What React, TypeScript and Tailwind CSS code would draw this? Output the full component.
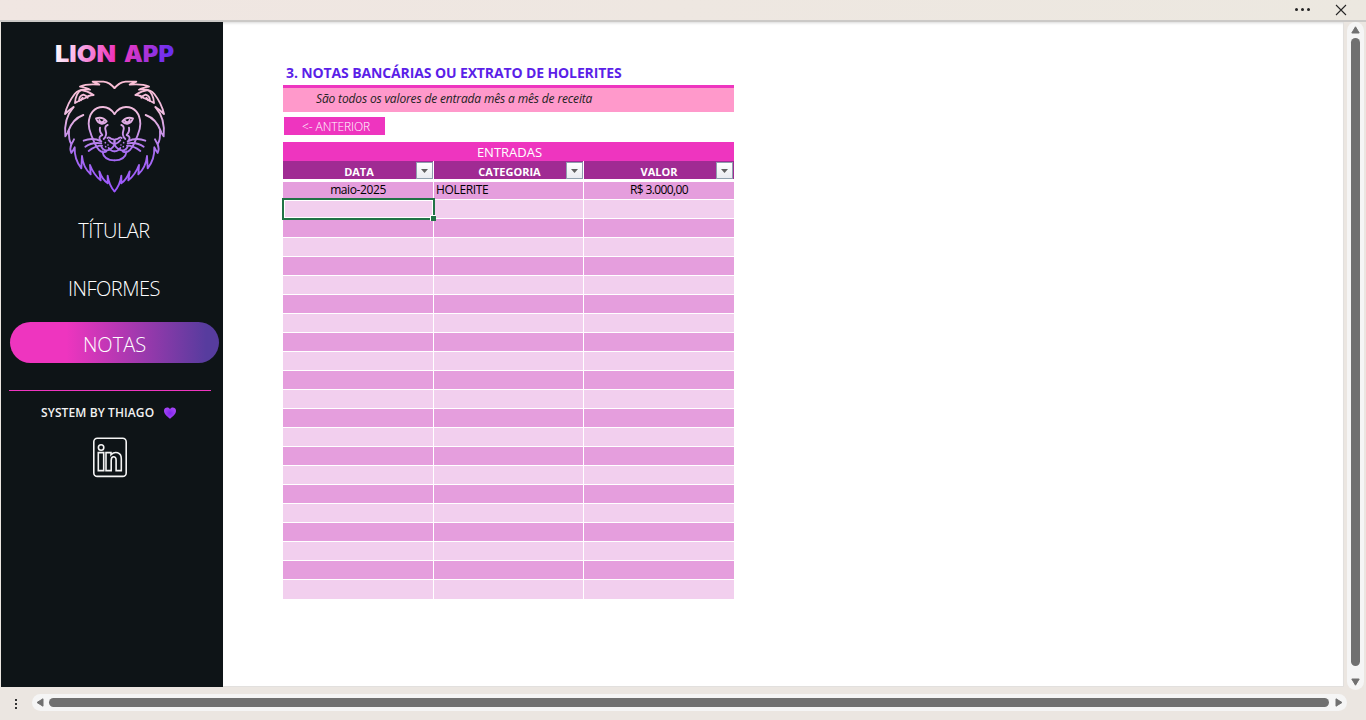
import React from "react";

const half = [
  "M223.5 174 C214 164 207 157 190 155 L158 155 C166 158 172 161 178 164 C158 162 135 163 120 170 C132 172 142 174 150 179 C128 176 112 182 104 192 C90 210 80 230 75 252 C84 243 92 236 101 231",
  "M105 219 C106 203 113 186 124 180 C138 182 150 188 161 195 C150 196 142 198 136 204 C128 207 117 212 105 219",
  "M117 213 C117 203 122 196 130 194 C136 196 140 199 143 203 M122 211 L128 203",
  "M100 232 C84 250 72 278 76 319 C80 312 83 308 87 303 C86 322 88 334 94 343 C97 338 99 334 102 328",
  "M130 255 C110 262 93 280 84 305 M94 343 C90 352 91 362 94 369 C98 364 101 358 104 352 C103 378 110 398 124 415 L126 378 C128 400 138 420 152 433 L150 405 C158 426 168 440 182 451 L178 424 C184 440 192 452 203 460 L203 437 C206 458 214 474 223.5 484",
  "M223.5 252 C214 238 202 231 189 231 C162 231 147 252 146 281 C146 300 152 310 157 323 C162 336 168 350 177 360 C184 367 192 368 199 364",
  "M168 265 C180 261 192 264 200 274 C190 286 175 283 168 265 Z M178 270 C180 278 188 279 192 272",
  "M203 285 C196 287 194 294 197 302 C201 314 199 320 191 327 M180 293 C178 303 182 310 187 315 C178 318 176 324 181 332",
  "M223.5 330 C219 326 216 329 211 325 C207 322 207 320 202 324 M223.5 330 L223.5 345 C218 353 210 360 201 361 C192 362 187 357 184 350 M206 331 C210 337 216 341 223.5 343",
  "M187 364 C190 382 205 391 223.5 391 M206 354 C211 361 217 364 223.5 364",
  "M184 334 C166 325 148 325 131 332 M184 340 C165 337 148 341 136 350 M186 347 C170 347 157 354 146 363",
];

function Lion() {
  return (
    <svg className="h-[120px] w-[109px]" viewBox="60 141 327 360" fill="none" stroke="url(#mane)" strokeWidth="5.6" strokeLinecap="round" strokeLinejoin="round">
      <defs>
        <linearGradient id="mane" gradientUnits="userSpaceOnUse" x1="0" y1="155" x2="0" y2="484">
          <stop offset="0" stopColor="#fbbfd5" />
          <stop offset=".3" stopColor="#eebbe0" />
          <stop offset=".65" stopColor="#a66cf2" />
          <stop offset="1" stopColor="#9b55ff" />
        </linearGradient>
      </defs>
      {[undefined, "translate(447 0) scale(-1 1)"].map((t, i) => (
        <g key={i} transform={t}>
          {half.map((d) => <path key={d} d={d} />)}
          <path strokeWidth="5" d="M196 338h.1M204 345h.1M197 350h.1" />
        </g>
      ))}
    </svg>
  );
}

function FilterButton({ last }: { last: boolean }) {
  return (
    <span className={`absolute top-[1px] flex h-[17px] w-[17px] items-center justify-center border border-[#8f9fae] bg-gradient-to-b from-white to-[#e9ebf0] ${last ? "right-[1px]" : "right-0"}`}>
      <svg className="h-[4px] w-[7px]" viewBox="0 0 7 4"><path d="M0 0h7L3.5 4z" fill="#606060" /></svg>
    </span>
  );
}

function NavItem({ label, className }: { label: string; className: string }) {
  return <div className={`flex items-center justify-center text-[20px] leading-none font-light text-white ${className}`}>{label}</div>;
}

const rows = Array.from({ length: 22 }, (_, i) => (i === 0 ? ["maio-2025", "HOLERITE", "R$ 3.000,00"] : ["", "", ""]));
const cellText = ["justify-center tracking-[-0.4px]", "pl-[2px] tracking-[-0.35px]", "justify-center tracking-[-0.6px]"];

export default function App() {
  return (
    <div className="flex h-[720px] w-[1366px] flex-col overflow-hidden bg-[#ebe6e1] font-['Open_Sans','Noto_Sans',sans-serif]">
      <header className="flex h-[22px] shrink-0 items-start justify-end border-b-2 border-[#cbc9c7] bg-gradient-to-r from-[#f0e6e2] to-[#ece8e0]">
        <svg className="h-[20px] w-[80px]" viewBox="1286 0 80 20" fill="none" stroke="#262626">
          <path d="M1296.5 9.5h.01M1302.5 9.5h.01M1308.5 9.5h.01" strokeWidth="3" strokeLinecap="round" />
          <path d="M1336 5l10 10M1346 5l-10 10" strokeWidth="1.1" />
        </svg>
      </header>

      <div className="flex h-[665px] shrink-0">
        <aside className="ml-px flex h-full w-[222px] flex-col bg-[#0e1417]">
          <div className="ml-[54px] flex h-[55px] items-center pt-[8px]">
            <svg className="h-[30px] w-[122px]" viewBox="0 0 122 30">
              <defs>
                <linearGradient id="brand" gradientUnits="userSpaceOnUse" x1="0" y1="8" x2="114" y2="36">
                  <stop offset="0" stopColor="#ffffff" />
                  <stop offset=".5" stopColor="#ee35bd" />
                  <stop offset=".58" stopColor="#ec38c0" />
                  <stop offset=".95" stopColor="#6a2ff0" />
                </linearGradient>
              </defs>
              <g className="font-['Inter',sans-serif] text-[22.5px] font-black" fill="url(#brand)">
                <text x="0" y="23" textLength="61" lengthAdjust="spacingAndGlyphs">LION</text>
                <text x="69" y="23" textLength="50" lengthAdjust="spacingAndGlyphs">APP</text>
              </g>
            </svg>
          </div>
          <div className="ml-[59px] h-[120px]"><Lion /></div>
          <NavItem label="TÍTULAR" className="mt-[13px] ml-[4px] h-[40px] pt-[2px] tracking-[-0.45px]" />
          <NavItem label="INFORMES" className="mt-[18px] ml-[4px] h-[40px] pt-[2px] tracking-[-0.5px]" />
          <NavItem label="NOTAS" className="mt-[14px] ml-[9px] h-[41px] w-[209px] rounded-full bg-[linear-gradient(90deg,#ee35bf_0%,#ee35bf_27%,#573c9e_94%)] pt-[5px]" />
          <div className="mt-[27px] ml-[8px] h-px w-[202px] bg-[#ee35bf]" />
          <div className="mt-[13px] ml-[40px] flex h-[18px] items-center text-[12px] font-semibold whitespace-nowrap text-[#f2f2f2]">
            <span className="w-[114px] tracking-[0.1px]">SYSTEM BY THIAGO</span>
            <svg className="ml-[9px] h-[12px] w-[12px]" viewBox="0 0 12 12">
              <defs><radialGradient id="heart"><stop offset="0" stopColor="#7e25ee" /><stop offset="1" stopColor="#a444f5" /></radialGradient></defs>
              <path d="M6 2.2C7-.2 12-.1 12 3.8 12 7.2 8.5 9.6 6 11.8 3.5 9.6 0 7.2 0 3.8 0-.1 5-.2 6 2.2Z" fill="url(#heart)" />
            </svg>
          </div>
          <svg className="mt-[14px] ml-[91px] h-[42px] w-[36px]" viewBox="0 0 36 42" fill="none" stroke="#f4f4f4" strokeWidth="1.6">
            <rect x="1.8" y="2.2" width="32.4" height="38.2" rx="3.5" />
            <circle cx="9.1" cy="11.5" r="2.7" />
            <path d="M6.3 16.6h5.4v18H6.3zM14 16.6h5v2.2c4-4 10.3-2.5 10.3 4v11.8h-5.2V24c0-4.4-4.9-4.2-4.9.2v10.4H14z" />
          </svg>
        </aside>

        <main className="h-full w-[1121px] border-r border-b border-[#e2e0de] bg-white shadow-[inset_0_3px_3px_-2px_#d8d8d8]">
          <section className="ml-[60px] flex w-[451px] flex-col pt-[40px]">
            <h1 className="flex h-[23px] items-center pb-[2px] pl-[3px] text-[14px] leading-none font-bold tracking-[-0.12px] whitespace-nowrap text-[#5b1fe8]">3. NOTAS BANCÁRIAS OU EXTRATO DE HOLERITES</h1>
            <p className="flex h-[27px] items-center border-t-[3px] border-[#ee35bf] bg-[#ff99cb] pb-[2px] pl-[33px] text-[12px] leading-none tracking-[-0.15px] whitespace-nowrap text-[#222] italic">São todos os valores de entrada mês a mês de receita</p>
            <button className="mt-[5px] ml-px flex h-[18px] w-[101px] items-center justify-center bg-[#ee35bf] pt-[2px] pl-[3px] text-[12px] leading-none font-light tracking-[-0.1px] text-white">&lt;- ANTERIOR</button>
            <div className="mt-[7px] flex h-[19px] items-center justify-center bg-[#ee35bf] pt-[2px] pl-[2px] text-[13px] leading-none text-white">ENTRADAS</div>
            <div className="grid h-[18px] grid-cols-[150px_149px_150px] gap-x-px bg-[#a02b93]">
              {["DATA", "CATEGORIA", "VALOR"].map((h, i) => (
                <div key={h} className={`relative flex items-center justify-center pt-[3px] text-[11px] leading-none font-bold text-white ${i < 2 ? "pl-[2px] shadow-[1px_0_0_#fff]" : ""}`}>
                  {h}
                  <FilterButton last={i === 2} />
                </div>
              ))}
            </div>
            <div className="mt-[3px] flex flex-col gap-px text-[12px] leading-none text-black">
              {rows.map((r, i) => (
                <div key={i} className={`grid grid-cols-[150px_149px_150px] gap-x-px ${i === 0 ? "h-[17px]" : i === 21 ? "h-[19px]" : "h-[18px]"}`}>
                  {r.map((c, j) => (
                    <div key={j} className={`relative flex items-center pb-px whitespace-nowrap ${cellText[j]} ${i % 2 ? "bg-[#f2cfee]" : "bg-[#e59edd]"}`}>
                      {c}
                      {i === 1 && j === 0 && (
                        <span className="absolute -top-[2px] -left-px z-10 h-[22px] w-[153px] border-2 border-[#217346] shadow-[inset_0_0_0_1px_#fff]">
                          <span className="absolute -right-[3px] -bottom-[3px] h-[6px] w-[6px] border-t border-l border-white bg-[#217346]" />
                        </span>
                      )}
                    </div>
                  ))}
                </div>
              ))}
            </div>
          </section>
        </main>

        <div className="ml-[3px] flex h-[668px] w-[17px] shrink-0 flex-col items-center rounded-full bg-[#f5f5f5]">
          <svg className="mt-[4px] h-[8px] w-[9px] shrink-0" viewBox="0 0 9 8"><path d="M4.5.8L8.2 7H.8z" fill="#707070" stroke="#707070" strokeLinejoin="round" /></svg>
          <div className="mt-[4px] h-[628px] w-[9px] rounded-full bg-[#707070]" />
          <svg className="mt-[12px] h-[8px] w-[9px] shrink-0" viewBox="0 0 9 8"><path d="M4.5 7.2L8.2 1H.8z" fill="#707070" stroke="#707070" strokeLinejoin="round" /></svg>
        </div>
      </div>

      <footer className="flex h-[33px] items-start pt-[7px]">
        <div className="mt-[5px] ml-[15px] flex w-[2px] flex-col gap-[2px]">
          {[0, 1, 2].map((n) => <span key={n} className="h-[2px] w-[2px] bg-[#333]" />)}
        </div>
        <div className="ml-[15px] flex h-[17px] w-[1315px] items-center rounded-full bg-[#f5f5f5]">
          <svg className="ml-[4px] h-[9px] w-[8px]" viewBox="0 0 8 9"><path d="M1 4.5L7 .8v7.4z" fill="#707070" stroke="#707070" strokeLinejoin="round" /></svg>
          <div className="ml-[5px] h-[9px] w-[1280px] rounded-full bg-[#707070]" />
          <svg className="ml-[6px] h-[9px] w-[8px]" viewBox="0 0 8 9"><path d="M7 4.5L1 .8v7.4z" fill="#707070" stroke="#707070" strokeLinejoin="round" /></svg>
        </div>
      </footer>
    </div>
  );
}
